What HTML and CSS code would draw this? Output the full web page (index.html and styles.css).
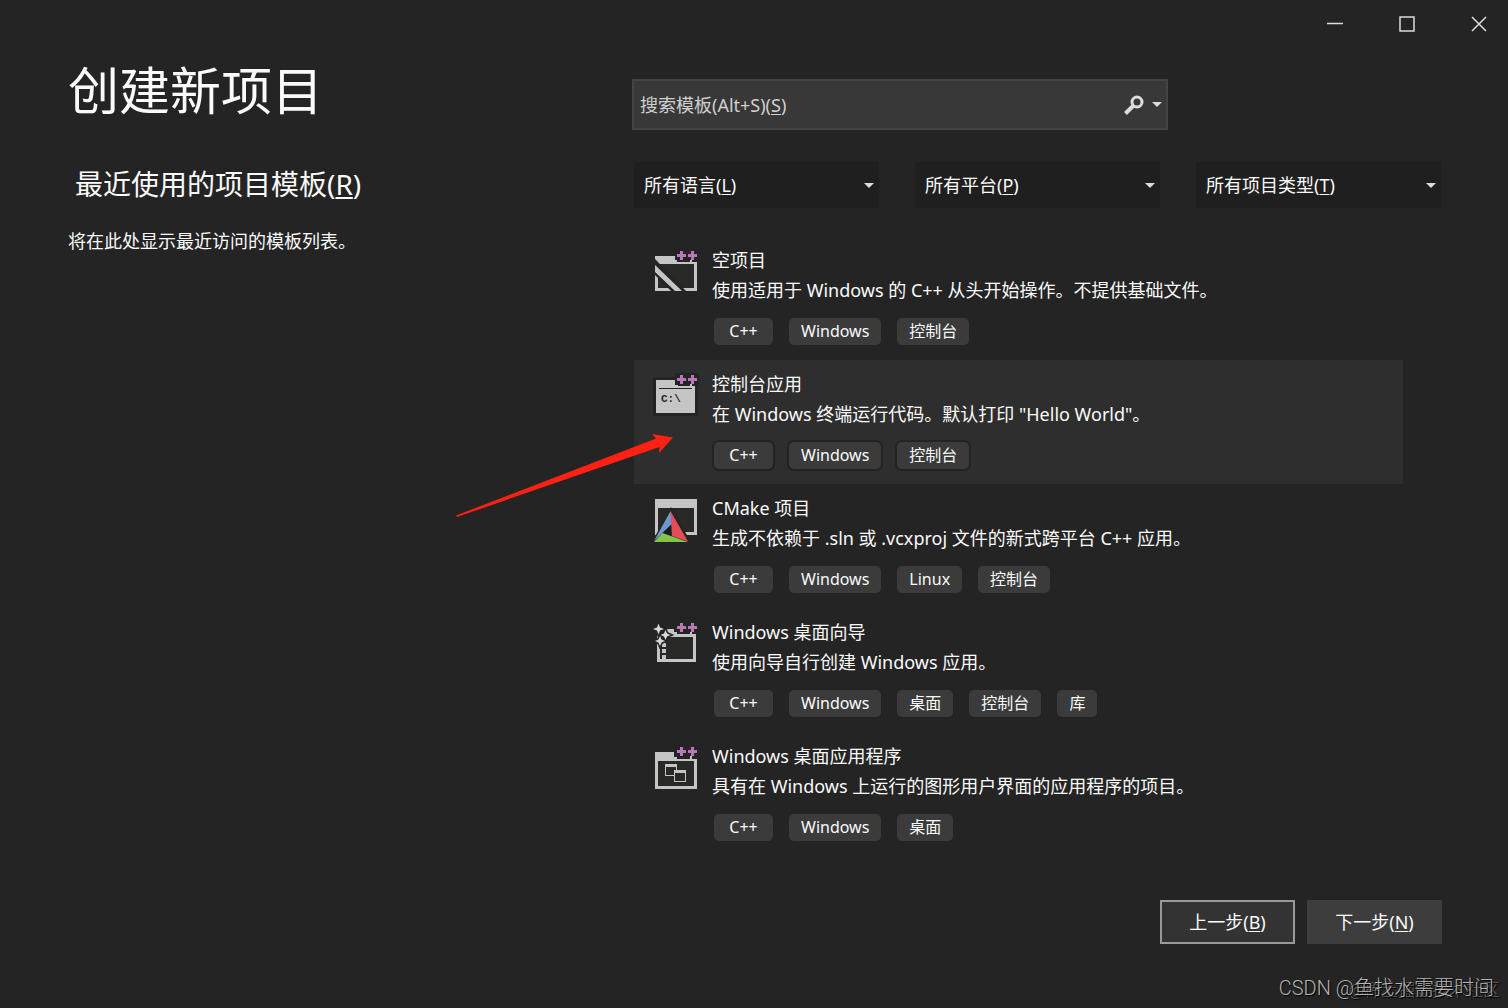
FILE: index.html
```html
<!DOCTYPE html>
<html lang="zh-CN">
<head>
  <meta charset="UTF-8">
  <meta name="viewport" content="width=device-width, initial-scale=1">
  <title>创建新项目</title>
  <link rel="stylesheet" href="styles.css">
</head>
<body>
  <!-- shared "++" badge -->
  <svg class="defs" aria-hidden="true">
    <symbol id="plusplus" viewBox="0 0 48 48">
      <path d="M23 3h24v13H26v-2h-3z" fill="#242424"/>
      <path d="M28 5h3v3h3v3h-3v3h-3v-3h-3V8h3zM39 5h3v3h3v3h-3v3h-3v-3h-3V8h3z" fill="#b977b5"/>
    </symbol>
  </svg>

  <div class="titlebar">
    <button class="win-btn" aria-label="最小化">
      <svg width="18" height="18"><path d="M1 8.5h16"/></svg>
    </button>
    <button class="win-btn" aria-label="最大化">
      <svg width="18" height="18"><path d="M2 2h14v14H2z"/></svg>
    </button>
    <button class="win-btn" aria-label="关闭">
      <svg width="18" height="18"><path d="M2 2l14 14M16 2L2 16"/></svg>
    </button>
  </div>

  <main class="page">
    <section class="recent">
      <h1>创建新项目</h1>
      <h2>最近使用的项目模板(<u>R</u>)</h2>
      <p>将在此处显示最近访问的模板列表。</p>
    </section>

    <section class="picker">
      <div class="search">
        <label class="search-field">
          <input type="text" placeholder=" " accesskey="s">
          <span>搜索模板(Alt+S)(<u>S</u>)</span>
        </label>
        <button class="search-btn" aria-label="搜索">
          <svg width="20" height="20"><circle cx="13" cy="7" r="5" fill="none" stroke="#dcdcdc" stroke-width="3"/><path d="M9 11l-7.500 7.500" stroke="#dcdcdc" stroke-width="4"/></svg>
        </button>
        <button class="search-menu" aria-label="搜索选项"><i class="caret"></i></button>
      </div>

      <div class="filters">
        <label class="filter">
          <span>所有语言(<u>L</u>)</span>
          <select><option value=""></option><option>C++</option></select>
          <i class="caret"></i>
        </label>
        <label class="filter">
          <span>所有平台(<u>P</u>)</span>
          <select><option value=""></option><option>Windows</option><option>Linux</option></select>
          <i class="caret"></i>
        </label>
        <label class="filter">
          <span>所有项目类型(<u>T</u>)</span>
          <select><option value=""></option><option>控制台</option><option>桌面</option><option>库</option></select>
          <i class="caret"></i>
        </label>
      </div>

      <ul class="templates" role="listbox" aria-label="项目模板">
        <li class="template" role="option" aria-selected="false">
          <svg class="icon" viewBox="0 0 48 48">
            <path d="M3 10h22v6h20v29H3z" fill="#c5c5c5"/>
            <path d="M6 18h36v24H6z" fill="#282826"/>
            <path d="M3 13v16l16 16h15z" fill="#242424"/>
            <path d="M3 19v7l20 19h7z" fill="#c5c5c5"/>
            <use href="#plusplus" width="48" height="48"/>
            <path d="M38 14h2v3h-2z" fill="#c5c5c5"/>
          </svg>
          <div class="info">
            <h3>空项目</h3>
            <p>使用适用于 Windows 的 C++ 从头开始操作。不提供基础文件。</p>
            <div class="tags"><span>C++</span><span>Windows</span><span>控制台</span></div>
          </div>
        </li>

        <li class="template selected" role="option" aria-selected="true">
          <svg class="icon" viewBox="0 0 48 48">
            <path d="M1 7h45v39H1z" fill="#242424"/>
            <path d="M4 10h19v5h20v28H4z" fill="#c5c5c5"/>
            <path d="M7 18h33v1H7z" fill="#242424"/>
            <text class="prompt" x="9" y="32">C:\</text>
            <use href="#plusplus" width="48" height="48"/>
            <path d="M38 14h2v3h-2z" fill="#c5c5c5"/>
          </svg>
          <div class="info">
            <h3>控制台应用</h3>
            <p>在 Windows 终端运行代码。默认打印 "Hello World"。</p>
            <div class="tags"><span>C++</span><span>Windows</span><span>控制台</span></div>
          </div>
          <svg class="arrow" viewBox="0 0 220 88" aria-hidden="true">
            <path d="M2 83.500L202 6.500 198 2l21 3.500L205 21l.5-6L3 85z" fill="#ff2114"/>
          </svg>
        </li>

        <li class="template" role="option" aria-selected="false">
          <svg class="icon" viewBox="0 0 48 48">
            <path d="M3 5h42v36H3z" fill="#c5c5c5"/>
            <path d="M6 14h36v24H6z" fill="#282826"/>
            <path d="M19 13L-1 50h41z" fill="#242424"/>
            <path d="M18.500 17l1.500 13L2 47z" fill="#6c98d0"/>
            <path d="M18.500 17L36 47.500 20 42z" fill="#e44d55"/>
            <path d="M2 48l8.500-9L36 48z" fill="#83c24c"/>
            <path d="M19 31v10.500L11 38.500z" fill="#1c1c1c"/>
          </svg>
          <div class="info">
            <h3>CMake 项目</h3>
            <p>生成不依赖于 .sln 或 .vcxproj 文件的新式跨平台 C++ 应用。</p>
            <div class="tags"><span>C++</span><span>Windows</span><span>Linux</span><span>控制台</span></div>
          </div>
        </li>

        <li class="template" role="option" aria-selected="false">
          <svg class="icon" viewBox="0 0 48 48">
            <path d="M14 11h8v3h3v2h19v28H5V16h9z" fill="#c5c5c5"/>
            <path d="M8 19h33v22H8z" fill="#282826"/>
            <path d="M10 24h4v5h-4zM10 31h4v4h-4zM10 37h4v4h-4z" fill="#c5c5c5"/>
            <use href="#plusplus" width="48" height="48"/>
            <path d="M38 14h2v3h-2z" fill="#c5c5c5"/>
            <path class="stars" d="M6.500 5.500l1.500 4 4 1.500-4 1.500-1.500 4-1.500-4-4-1.500 4-1.500zM13.500 12l1.500 3.500 3.500 1.500-3.500 1.500-1.500 3.500-1.500-3.500L8.500 17l3.500-1.500zM8 18l1.500 3.500L13 23l-3.500 1.500L8 28l-1.500-3.500L3 23l3.500-1.500z"/>
          </svg>
          <div class="info">
            <h3>Windows 桌面向导</h3>
            <p>使用向导自行创建 Windows 应用。</p>
            <div class="tags"><span>C++</span><span>Windows</span><span>桌面</span><span>控制台</span><span>库</span></div>
          </div>
        </li>

        <li class="template" role="option" aria-selected="false">
          <svg class="icon" viewBox="0 0 48 48">
            <path d="M3 10h19v5h3v2h20v30H3z" fill="#c5c5c5"/>
            <path d="M6 19h36v25H6z" fill="#282826"/>
            <use href="#plusplus" width="48" height="48"/>
            <path d="M38 14h2v3h-2z" fill="#c5c5c5"/>
            <path d="M13 22h12v12H13z" fill="#c5c5c5"/>
            <path d="M14 25h10v8H14z" fill="#282826"/>
            <path d="M22 28h12v12H22z" fill="#c5c5c5"/>
            <path d="M23 31h10v8H23z" fill="#282826"/>
          </svg>
          <div class="info">
            <h3>Windows 桌面应用程序</h3>
            <p>具有在 Windows 上运行的图形用户界面的应用程序的项目。</p>
            <div class="tags"><span>C++</span><span>Windows</span><span>桌面</span></div>
          </div>
        </li>
      </ul>

      <div class="actions">
        <button class="btn back" accesskey="b">上一步(<u>B</u>)</button>
        <button class="btn" accesskey="n">下一步(<u>N</u>)</button>
      </div>
    </section>
  </main>

  <div class="mark mark-back">@稀土掘金技术社区</div>
  <div class="mark">CSDN @鱼找水需要时间</div>
</body>
</html>
```
FILE: styles.css
```css
:root {
  --bg: #242424;
  --text: #fafafa;
  --icon: #dcdcdc;
  --field: #383838;
  --combo: #1f1f1f;
  --tag: #3b3b3b;
  --selected: #2e2e2e;
}
* { box-sizing: border-box; }
body {
  margin: 0;
  min-height: 100vh;
  position: relative;
  background: var(--bg);
  color: var(--text);
  font-family: "Noto Sans", "Noto Sans CJK SC", sans-serif;
  font-size: 18px;
  line-height: 30px;
}
h1, h2, h3, p, ul {
  margin: 0;
  padding: 0;
  font-weight: 400;
}
button, input, select {
  font: inherit;
  color: inherit;
  border: 0;
  background: none;
  padding: 0;
}
u { text-underline-offset: 2px; }
.defs {
  position: absolute;
  width: 0;
  height: 0;
}

/* window buttons */
.titlebar {
  display: flex;
  justify-content: flex-end;
  gap: 14px;
}
.win-btn {
  width: 58px;
  height: 48px;
  display: flex;
  align-items: center;
  justify-content: center;
}
.win-btn:hover { background: var(--tag); }
.win-btn path {
  fill: none;
  stroke: var(--icon);
  stroke-width: 1.5;
}

.page {
  display: grid;
  grid-template-columns: minmax(300px, 564px) minmax(0, 1fr);
  padding: 0 66px 64px 68px;
}
.recent { padding-top: 6px; }
.recent h1 {
  font-size: 51px;
  line-height: 72px;
}
.recent h2 {
  font-size: 28px;
  line-height: 40px;
  padding-left: 7px;
  margin: 38px 0 22px;
}

/* search */
.picker { padding-top: 31px; }
.search {
  display: flex;
  align-items: center;
  width: 536px;
  max-width: 100%;
  height: 51px;
  border: 2px solid #434343;
  background: var(--field);
}
.search-field {
  flex: 1;
  display: grid;
  align-items: center;
  color: #d0d0d0;
}
.search-field input, .search-field span {
  grid-area: 1 / 1;
  padding-left: 6px;
}
.search-field input {
  width: 100%;
  height: 46px;
  outline: none;
}
.search-field span { pointer-events: none; }
.search-field input:not(:placeholder-shown) + span { visibility: hidden; }
.search-btn {
  display: flex;
  width: 20px;
}
.search-menu {
  display: flex;
  padding: 8px 4px 8px 8px;
}
.caret {
  border: 5px solid transparent;
  border-top-color: var(--icon);
  border-bottom: 0;
}

/* filters */
.filters {
  display: flex;
  justify-content: space-between;
  gap: 16px;
  margin: 32px 0 28px;
  padding: 0 1px 0 2px;
}
.filter {
  display: grid;
  align-items: center;
  width: 245px;
  height: 46px;
  background: var(--combo);
}
.filter > * { grid-area: 1 / 1; }
.filter span {
  padding-left: 10px;
  pointer-events: none;
}
.filter select {
  width: 100%;
  height: 46px;
  padding-left: 10px;
  appearance: none;
}
.filter option { background: var(--combo); }
.filter:has(option:not([value=""]):checked) span { visibility: hidden; }
.filter .caret {
  justify-self: end;
  margin-right: 5px;
  pointer-events: none;
}

/* template list */
.templates {
  list-style: none;
  margin: 0 39px 0 2px;
}
.template {
  position: relative;
  display: flex;
  gap: 12px;
  padding: 9px 18px 15px;
}
.selected { background: var(--selected); }
.icon {
  width: 48px;
  height: 48px;
  margin-top: 1px;
  flex: none;
}
.prompt {
  font: bold 11px "Liberation Mono", monospace;
  fill: #242424;
}
.stars {
  fill: #d8d8d8;
  stroke: var(--bg);
  stroke-width: 3;
  paint-order: stroke;
}
.template h3 { font-size: 18px; }
.tags {
  display: flex;
  flex-wrap: wrap;
  gap: 16px;
  margin: 13px 0 0 2px;
}
.tags span {
  padding: 0 12px;
  border-radius: 5px;
  background: var(--tag);
  font-size: 16px;
  line-height: 27px;
  text-align: center;
}
.tags span:first-child { min-width: 59px; }
.selected .tags span { box-shadow: 0 0 0 2px #232323; }
.arrow {
  position: absolute;
  left: -180px;
  top: 72px;
  width: 220px;
  height: 88px;
  pointer-events: none;
}

/* footer */
.actions {
  display: flex;
  justify-content: flex-end;
  gap: 12px;
  margin-top: 44px;
}
.btn {
  width: 135px;
  height: 44px;
  background: #3d3d3d;
}
.btn.back {
  border: 2px solid #999;
  background: #333;
}
.mark {
  position: absolute;
  right: 14px;
  bottom: 5px;
  color: #b4b4b4;
  font-family: Roboto, "Noto Sans CJK SC", sans-serif;
  font-size: 20px;
  font-weight: 300;
  text-shadow: 1px 1px 1px #000;
}
.mark-back {
  right: 8px;
  bottom: 3px;
  color: #666;
  font-size: 17px;
}
```
